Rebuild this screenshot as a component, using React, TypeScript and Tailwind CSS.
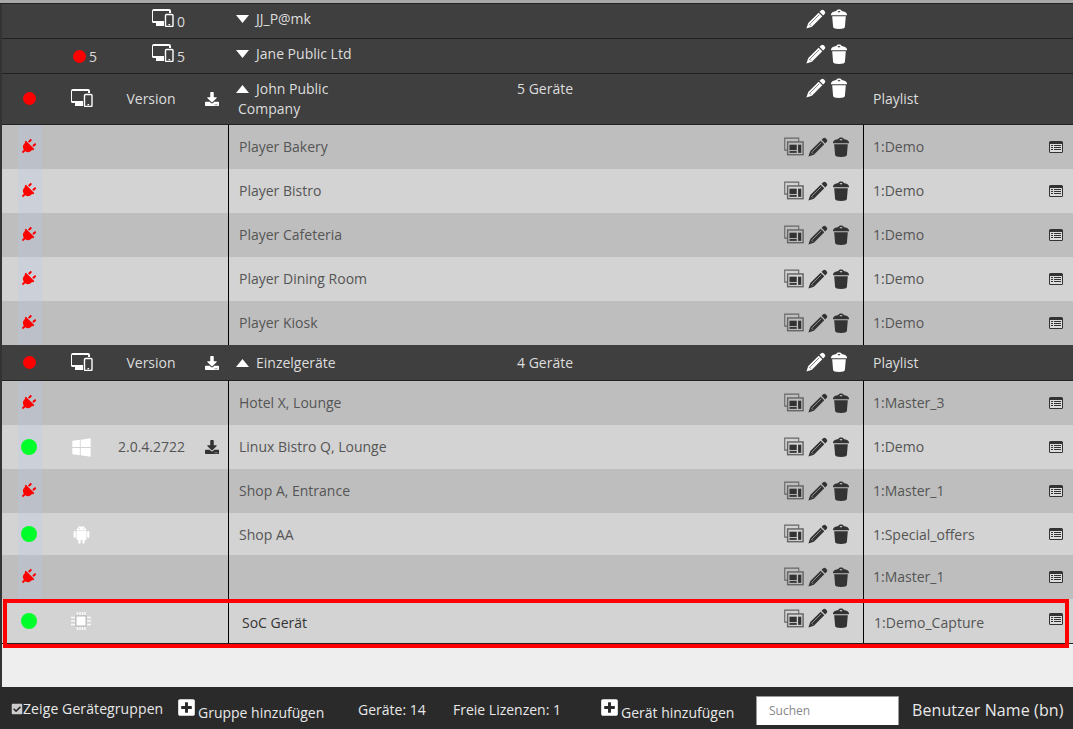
import React from 'react';
import { AiFillAndroid } from 'react-icons/ai';
import { FaDownload, FaPlug, FaPlusSquare, FaCheckSquare, FaWindows } from 'react-icons/fa';

const font = { fontFamily: '"Open Sans", sans-serif' };

// monitor with a tablet in front of it
const DevicesIcon = () => (
  <svg width="23" height="19" viewBox="0 0 23 19" className="shrink-0">
    <path d="M3 1h15a2 2 0 0 1 2 2v2h-2V3H2v10h11v2H2.5A1.5 1.5 0 0 1 1 13.5V3a2 2 0 0 1 2-2z" fill="#fff" />
    <rect x="5" y="15" width="8" height="3" fill="#fff" />
    <rect x="14.5" y="6.5" width="7.5" height="12" rx="1" fill="none" stroke="#fff" strokeWidth="1.4" />
    <rect x="17.5" y="16" width="1.6" height="1.2" fill="#fff" />
  </svg>
);

const PencilIcon = ({ color }: { color: string }) => {
  const line = color === '#fff' ? '#3f3f3f' : '#bebebe';
  return (
    <svg width="20" height="20" viewBox="0 0 21 21" className="shrink-0">
      <path d="M16 1.200a2 2 0 0 1 2.600.2l1 1a2 2 0 0 1 .2 2.600l-1.800 1.800-3.800-3.800z" fill={color} />
      <path d="M13.300 3.900l3.800 3.800L6.200 18.600l-5.800 2 2-5.800z" fill={color} />
      <path d="M3.400 15.700l1.900 1.900M4.400 15.600L14 6" stroke={line} strokeWidth="0.7" />
    </svg>
  );
};

const TrashIcon = ({ color }: { color: string }) => (
  <svg width="16" height="20" viewBox="0 0 16 20" className="shrink-0">
    <path d="M8 .5c1.700 0 2.500.6 2.800 1.600C13.400 2.500 15.500 3.500 16 5.200V6.300H0V5.200C.5 3.500 2.600 2.500 5.200 2.100 5.500 1.100 6.300.5 8 .5zM8 2c-.9 0-1.400.3-1.500.8L8 3.600l1.500-.8C9.400 2.300 8.900 2 8 2z" fill={color} fillRule="evenodd" />
    <path d="M1.200 7.300h13.600l-.9 10.600c-.1 1.200-2.200 2-5.900 2s-5.800-.8-5.900-2z" fill={color} />
  </svg>
);

const ScreensIcon = () => (
  <svg width="20" height="19" viewBox="0 0 22 20" className="shrink-0">
    <path d="M4 14H.8V.8h15.400V5" fill="none" stroke="#666" strokeWidth="1.200" />
    <rect x="4" y="5" width="17" height="14" fill="none" stroke="#666" strokeWidth="1.600" />
    <rect x="6" y="8" width="8" height="6" fill="#333" />
    <rect x="15.500" y="8" width="3.500" height="9" fill="#333" />
    <rect x="6" y="15" width="8" height="2" fill="#333" />
  </svg>
);

const PlaylistIcon = () => (
  <svg width="14" height="12" viewBox="0 0 14 12" className="shrink-0">
    <rect x="0" y="0" width="14" height="12" rx="1.500" fill="#333" />
    <rect x="1" y="3" width="12" height="8" fill="#ddd" />
    <path d="M2 4.500h2M5 4.500h7M2 6.500h2M5 6.500h7M2 8.500h2M5 8.500h7" stroke="#333" strokeWidth="1" />
  </svg>
);

const ChipIcon = () => (
  <svg width="22" height="20" viewBox="0 0 22 20" className="shrink-0">
    <rect x="6" y="5" width="10" height="10" fill="#fff" stroke="#aaa" strokeWidth="0.800" />
    <path d="M7.500 1v3M10 1v3M12.500 1v3M15 1v3M7.500 16v3M10 16v3M12.500 16v3M15 16v3" stroke="#fafafa" strokeWidth="1.500" />
    <path d="M1 6.500h4M1 10h4M1 13.500h4M17 6.500h4M17 10h4M17 13.500h4" stroke="#fafafa" strokeWidth="1.500" />
  </svg>
);

const Caret = ({ up }: { up?: boolean }) => (
  <svg width="13" height="8" viewBox="0 0 13 8" className="shrink-0">
    <path d={up ? 'M6.500 0L13 8H0z' : 'M0 0h13L6.500 8z'} fill="#fff" />
  </svg>
);

const Dot = ({ color, size }: { color: string; size: number }) => (
  <svg width={size} height={size} viewBox="0 0 10 10" className="shrink-0">
    <circle cx="5" cy="5" r="5" fill={color} />
  </svg>
);

// collapsed group: offline count, device count, name
const GroupRow = ({ name, offline, count }: { name: string; offline?: string; count: string }) => (
  <div className="flex h-[35px] border-b border-[#222] bg-[#3f3f3f] text-white text-sm">
    <div className="flex w-[71px] shrink-0" />
    <div className="flex w-[78px] shrink-0 items-center gap-[3px]">
      {offline && <Dot color="#ff0000" size={13} />}
      {offline && <span className="text-[#ddd] relative top-[1px]">{offline}</span>}
    </div>
    <div className="flex w-[82px] shrink-0 items-center gap-[3px] pb-[8px]">
      <DevicesIcon />
      <span className="text-[#ddd] relative top-[5px]">{count}</span>
    </div>
    <div className="flex w-[573px] shrink-0 items-center gap-[7px] pl-[3px] pb-[5px] text-[#ddd]">
      <Caret />
      <span>{name}</span>
    </div>
    <div className="flex shrink-0 items-center gap-[5px] pb-[5px]">
      <PencilIcon color="#fff" />
      <TrashIcon color="#fff" />
    </div>
  </div>
);

// expanded group header with the column captions
const GroupHeader = ({ name, second, devices, tall }: { name: string; second?: string; devices: string; tall?: boolean }) => (
  <div className={`flex border-b border-[#222] bg-[#3f3f3f] text-sm text-[#ddd] ${tall ? 'h-[51px]' : 'h-[36px]'}`}>
    <div className={`flex w-[54px] shrink-0 items-center justify-center ${tall ? 'pb-[1px]' : ''}`}>
      <Dot color="#ff0000" size={13} />
    </div>
    <div className={`flex w-[52px] shrink-0 items-center justify-center pr-[2px] ${tall ? 'pb-[3px]' : 'pb-[2px]'}`}>
      <DevicesIcon />
    </div>
    <div className="flex w-[86px] shrink-0 items-center justify-center">Version</div>
    <div className="flex w-[36px] shrink-0 items-center pl-[11px] text-white">
      <FaDownload size={14} />
    </div>
    <div className={`flex w-[576px] shrink-0 ${tall ? 'pt-[5px]' : 'items-center'}`}>
      <div className={`w-[287px] shrink-0 pl-[6px] ${tall ? 'leading-[20px]' : ''}`}>
        <div className="flex items-center gap-[7px]">
          <Caret up />
          <span>{name}</span>
        </div>
        {second && <div className="pl-[2px]">{second}</div>}
      </div>
      <span className={tall ? 'leading-[20px]' : ''}>{devices}</span>
    </div>
    <div className={`flex shrink-0 gap-[5px] ${tall ? 'pt-[4px]' : 'items-center pb-[2px]'}`}>
      <PencilIcon color="#fff" />
      <TrashIcon color="#fff" />
    </div>
    <div className="flex flex-1 items-center pl-[26px]">Playlist</div>
  </div>
);

type Device = {
  name: string;
  playlist: string;
  os?: 'windows' | 'android';
  version?: string;
  short?: boolean;
};

const DeviceRow = ({ d, odd }: { d: Device; odd: boolean }) => (
  <div className={`flex text-sm text-[#555] ${d.short ? 'h-[42px]' : 'h-[44px]'} ${odd ? 'bg-[#bebebe]' : 'bg-[#d3d3d3]'}`}>
    <div className="flex w-[54px] shrink-0 justify-center pl-[1px]">
      <div className={`flex w-[24px] items-center justify-center ${d.os ? 'pr-[2px]' : 'pr-[3px]'} ${odd ? 'bg-[#bcc1c9]' : 'bg-[#ccd1d9]'}`}>
        {d.os ? <Dot color="#00ff2a" size={16} /> : <FaPlug size={16} color="#ff0000" className="rotate-45" />}
      </div>
    </div>
    <div className="flex w-[52px] shrink-0 items-center justify-center pr-[2px] text-white">
      {d.os === 'windows' && <FaWindows size={21} />}
      {d.os === 'android' && <AiFillAndroid size={21} />}
    </div>
    <div className="flex w-[86px] shrink-0 items-center justify-center pl-[1px]">{d.version}</div>
    <div className="flex w-[34px] shrink-0 items-center pl-[11px] text-[#333]">
      {d.version && <FaDownload size={14} />}
    </div>
    <div className="flex w-[635px] shrink-0 items-center justify-between border-l border-black pl-[10px] pr-[14px]">
      <span className={d.short ? 'pt-[2px]' : ''}>{d.name}</span>
      <div className="flex items-center gap-[4px] pb-[1px]">
        <ScreensIcon />
        <div className="flex items-center gap-[5px]">
          <PencilIcon color="#333" />
          <TrashIcon color="#333" />
        </div>
      </div>
    </div>
    <div className="flex flex-1 items-center justify-between border-l border-black pl-[9px] pr-[10px]">
      <span className={d.short ? 'pt-[2px]' : ''}>{d.playlist}</span>
      <PlaylistIcon />
    </div>
  </div>
);

const company: Device[] = [
  { name: 'Player Bakery', playlist: '1:Demo' },
  { name: 'Player Bistro', playlist: '1:Demo' },
  { name: 'Player Cafeteria', playlist: '1:Demo' },
  { name: 'Player Dining Room', playlist: '1:Demo' },
  { name: 'Player Kiosk', playlist: '1:Demo' },
];

const single: Device[] = [
  { name: 'Hotel X, Lounge', playlist: '1:Master_3' },
  { name: 'Linux Bistro Q, Lounge', playlist: '1:Demo', os: 'windows', version: '2.0.4.2722' },
  { name: 'Shop A, Entrance', playlist: '1:Master_1' },
  { name: 'Shop AA', playlist: '1:Special_offers', os: 'android', short: true },
  { name: '', playlist: '1:Master_1' },
];

const App = () => {
  return (
    <div className="flex h-screen flex-col overflow-hidden bg-[#eeeeee]" style={font}>
      <div className="h-[4px] shrink-0 border-b border-[#222] bg-[#a8a8a8]" />

      {/* Device table */}
      <div className="flex-1 border-l-2 border-[#333]">
        <GroupRow name="JJ_P@mk" count="0" />
        <GroupRow name="Jane Public Ltd" offline="5" count="5" />
        <GroupHeader name="John Public" second="Company" devices="5 Geräte" tall />
        {company.map((d, i) => (
          <DeviceRow key={d.name} d={d} odd={i % 2 === 0} />
        ))}
        <GroupHeader name="Einzelgeräte" devices="4 Geräte" />
        {single.map((d, i) => (
          <DeviceRow key={d.playlist + i} d={d} odd={i % 2 === 0} />
        ))}

        {/* Highlighted SoC device */}
        <div className="relative flex h-[45px] border-b border-[#222] bg-[#d3d3d3] text-sm text-[#555]">
          <div className="flex w-[54px] shrink-0 items-center justify-center pb-[1px] pr-[1px]">
            <Dot color="#00ff2a" size={16} />
          </div>
          <div className="flex w-[52px] shrink-0 items-center justify-center pb-[1px] pr-[2px]">
            <ChipIcon />
          </div>
          <div className="w-[120px] shrink-0" />
          <div className="flex w-[635px] shrink-0 items-center justify-between border-l border-black pl-[13px] pr-[14px] text-[#333]">
            <span className="relative top-[2px]">SoC Gerät</span>
            <div className="flex items-center gap-[4px] pb-[6px]">
              <ScreensIcon />
              <div className="flex items-center gap-[5px]">
                <PencilIcon color="#333" />
                <TrashIcon color="#333" />
              </div>
            </div>
          </div>
          <div className="flex flex-1 items-center justify-between border-l border-black pl-[10px] pr-[10px]">
            <span className="relative top-[2px] tracking-[0.05px]">1:Demo_Capture</span>
            <span className="pb-[4px]"><PlaylistIcon /></span>
          </div>
          <div className="absolute left-[1px] top-0 h-[49px] w-[1066px] border-4 border-[#ff0000]" />
        </div>
      </div>

      {/* Footer */}
      <div className="flex h-[42px] shrink-0 items-center bg-[#2a2a2a] pt-[4px] text-sm text-[#e8e8e8]">
        <div className="flex w-[177px] shrink-0 items-center pl-[11px]">
          <FaCheckSquare size={12} color="#ccc" className="mb-[3px]" />
          <span className="relative top-[-1px] tracking-[0.1px]">Zeige Gerätegruppen</span>
        </div>
        <div className="flex w-[181px] shrink-0 items-end gap-[2px]">
          <FaPlusSquare size={19} color="#fff" className="mb-[5px]" />
          <span className="relative top-[1px]">Gruppe hinzufügen</span>
        </div>
        <span className="w-[95px] shrink-0">Geräte: 14</span>
        <span className="w-[147px] shrink-0">Freie Lizenzen: 1</span>
        <div className="flex w-[156px] shrink-0 items-end gap-[2px]">
          <FaPlusSquare size={19} color="#fff" className="mb-[5px]" />
          <span className="relative top-[1px]">Gerät hinzufügen</span>
        </div>
        <input
          type="text"
          placeholder="Suchen"
          className="h-[29px] w-[143px] shrink-0 border border-[#999] border-b-0 bg-white px-[12px] text-xs outline-none placeholder:text-[#888]"
        />
        <span className="pl-[13px] text-base tracking-[0.1px]">Benutzer Name (bn)</span>
      </div>
    </div>
  );
};

export default App;
